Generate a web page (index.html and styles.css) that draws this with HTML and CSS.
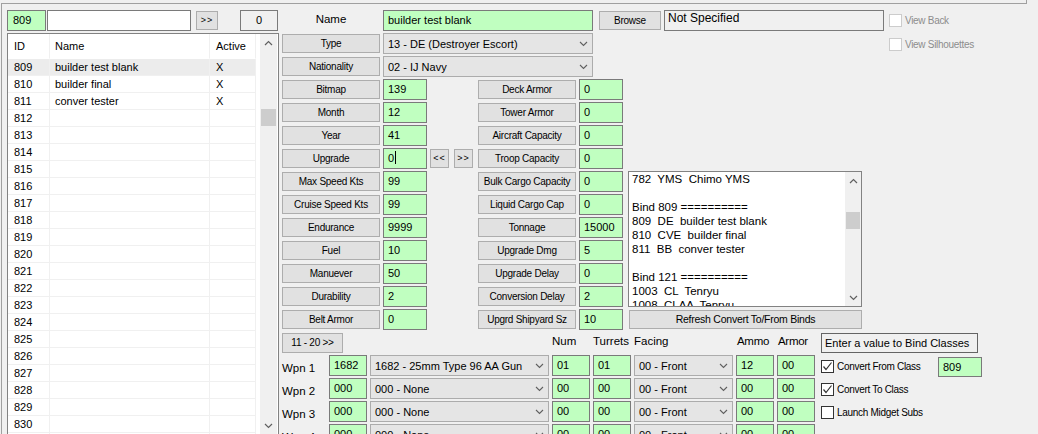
FILE: index.html
```html
<!DOCTYPE html>
<html>
<head>
<meta charset="utf-8">
<title>Ship Builder</title>
<link rel="stylesheet" href="styles.css">
</head>
<body>
<div class="frame">
  <div class="left">
    <div class="search">
      <div class="field green s-id">809</div>
      <div class="field white s-text"></div>
      <div class="btn s-go">&gt;&gt;</div>
      <div class="field plain s-zero">0</div>
    </div>
    <div class="list">
      <div class="tbl">
        <div class="tr th"><div class="c1">ID</div><div class="c2">Name</div><div class="c3">Active</div></div>
        <div class="tr sel"><div class="c1">809</div><div class="c2">builder test blank</div><div class="c3">X</div></div>
        <div class="tr"><div class="c1">810</div><div class="c2">builder final</div><div class="c3">X</div></div>
        <div class="tr"><div class="c1">811</div><div class="c2">conver tester</div><div class="c3">X</div></div>
        <div class="tr"><div class="c1">812</div><div class="c2"></div><div class="c3"></div></div>
        <div class="tr"><div class="c1">813</div><div class="c2"></div><div class="c3"></div></div>
        <div class="tr"><div class="c1">814</div><div class="c2"></div><div class="c3"></div></div>
        <div class="tr"><div class="c1">815</div><div class="c2"></div><div class="c3"></div></div>
        <div class="tr"><div class="c1">816</div><div class="c2"></div><div class="c3"></div></div>
        <div class="tr"><div class="c1">817</div><div class="c2"></div><div class="c3"></div></div>
        <div class="tr"><div class="c1">818</div><div class="c2"></div><div class="c3"></div></div>
        <div class="tr"><div class="c1">819</div><div class="c2"></div><div class="c3"></div></div>
        <div class="tr"><div class="c1">820</div><div class="c2"></div><div class="c3"></div></div>
        <div class="tr"><div class="c1">821</div><div class="c2"></div><div class="c3"></div></div>
        <div class="tr"><div class="c1">822</div><div class="c2"></div><div class="c3"></div></div>
        <div class="tr"><div class="c1">823</div><div class="c2"></div><div class="c3"></div></div>
        <div class="tr"><div class="c1">824</div><div class="c2"></div><div class="c3"></div></div>
        <div class="tr"><div class="c1">825</div><div class="c2"></div><div class="c3"></div></div>
        <div class="tr"><div class="c1">826</div><div class="c2"></div><div class="c3"></div></div>
        <div class="tr"><div class="c1">827</div><div class="c2"></div><div class="c3"></div></div>
        <div class="tr"><div class="c1">828</div><div class="c2"></div><div class="c3"></div></div>
        <div class="tr"><div class="c1">829</div><div class="c2"></div><div class="c3"></div></div>
        <div class="tr"><div class="c1">830</div><div class="c2"></div><div class="c3"></div></div>
        <div class="tr"><div class="c1">831</div><div class="c2"></div><div class="c3"></div></div>
      </div>
      <div class="vscroll">
        <div class="arr"><svg width="9" height="6" viewBox="0 0 9 6"><polyline points="1,5 4.5,1.5 8,5" fill="none" stroke="#606060" stroke-width="1.2"/></svg></div>
        <div class="track-gap list-gap"></div>
        <div class="thumb"></div>
        <div class="track-fill"></div>
        <div class="arr"><svg width="9" height="6" viewBox="0 0 9 6"><polyline points="1,1 4.5,4.5 8,1" fill="none" stroke="#606060" stroke-width="1.2"/></svg></div>
      </div>
    </div>
  </div>

  <div class="main">
    <div class="row">
      <div class="namelbl">Name</div>
      <div class="field green wide">builder test blank</div>
      <div class="btn browse">Browse</div>
      <div class="field plain notspec">Not Specified</div>
      <div class="chk dis vb"><span class="box"></span><span>View Back</span></div>
    </div>
    <div class="row">
      <div class="btn b98">Type</div>
      <div class="select wide"><span class="stxt">13 - DE (Destroyer Escort)</span><svg class="chev" width="9" height="6" viewBox="0 0 9 6"><polyline points="1,1 4.5,4.5 8,1" fill="none" stroke="#606060" stroke-width="1.1"/></svg></div>
      <div class="chk dis vs"><span class="box"></span><span>View Silhouettes</span></div>
    </div>
    <div class="row">
      <div class="btn b98">Nationality</div>
      <div class="select wide"><span class="stxt">02 - IJ Navy</span><svg class="chev" width="9" height="6" viewBox="0 0 9 6"><polyline points="1,1 4.5,4.5 8,1" fill="none" stroke="#606060" stroke-width="1.1"/></svg></div>
    </div>

    <div class="grid">
      <div class="memo">
        <div class="memotxt">782  YMS  Chimo YMS

Bind 809 ==========
809  DE  builder test blank
810  CVE  builder final
811  BB  conver tester

Bind 121 ==========
1003  CL  Tenryu
1008  CLAA  Tenryu</div>
        <div class="vscroll mscroll">
          <div class="arr"><svg width="9" height="6" viewBox="0 0 9 6"><polyline points="1,5 4.5,1.5 8,5" fill="none" stroke="#606060" stroke-width="1.2"/></svg></div>
          <div class="track-gap memo-gap"></div>
          <div class="thumb"></div>
          <div class="track-fill"></div>
          <div class="arr"><svg width="9" height="6" viewBox="0 0 9 6"><polyline points="1,1 4.5,4.5 8,1" fill="none" stroke="#606060" stroke-width="1.2"/></svg></div>
        </div>
      </div>

      <div class="btn gb">Bitmap</div><div class="field green">139</div><div></div><div class="btn gb">Deck Armor</div><div class="field green">0</div><div></div>
      <div class="btn gb">Month</div><div class="field green">12</div><div></div><div class="btn gb">Tower Armor</div><div class="field green">0</div><div></div>
      <div class="btn gb">Year</div><div class="field green">41</div><div></div><div class="btn gb">Aircraft Capacity</div><div class="field green">0</div><div></div>
      <div class="btn gb">Upgrade</div><div class="field green">0<span class="caret"></span></div><div class="arrows"><div class="btn ab">&lt;&lt;</div><div class="btn ab">&gt;&gt;</div></div><div class="btn gb">Troop Capacity</div><div class="field green">0</div><div></div>
      <div class="btn gb">Max Speed Kts</div><div class="field green">99</div><div></div><div class="btn gb">Bulk Cargo Capacity</div><div class="field green">0</div>
      <div class="btn gb">Cruise Speed Kts</div><div class="field green">99</div><div></div><div class="btn gb">Liquid Cargo Cap</div><div class="field green">0</div>
      <div class="btn gb">Endurance</div><div class="field green">9999</div><div></div><div class="btn gb">Tonnage</div><div class="field green">15000</div>
      <div class="btn gb">Fuel</div><div class="field green">10</div><div></div><div class="btn gb">Upgrade Dmg</div><div class="field green">5</div>
      <div class="btn gb">Manuever</div><div class="field green">50</div><div></div><div class="btn gb">Upgrade Delay</div><div class="field green">0</div>
      <div class="btn gb">Durability</div><div class="field green">2</div><div></div><div class="btn gb">Conversion Delay</div><div class="field green">2</div>
      <div class="btn gb">Belt Armor</div><div class="field green">0</div><div></div><div class="btn gb">Upgrd Shipyard Sz</div><div class="field green">10</div><div class="btn refresh">Refresh Convert To/From Binds</div>
    </div>

    <div class="wgrid">
      <div class="btn next">11 - 20 &gt;&gt;</div>
      <div></div>
      <div class="hd">Num</div>
      <div class="hd">Turrets</div>
      <div class="hd">Facing</div>
      <div class="hd alt">Ammo</div>
      <div class="hd alt">Armor</div>
      <div class="hint">Enter a value to Bind Classes</div>

      <div class="wl">Wpn 1</div>
      <div class="field green">1682</div>
      <div class="select"><span class="stxt">1682 - 25mm Type 96 AA Gun</span><svg class="chev" width="9" height="6" viewBox="0 0 9 6"><polyline points="1,1 4.5,4.5 8,1" fill="none" stroke="#606060" stroke-width="1.1"/></svg></div>
      <div class="field green">01</div>
      <div class="field green">01</div>
      <div class="select"><span class="stxt">00 - Front</span><svg class="chev" width="9" height="6" viewBox="0 0 9 6"><polyline points="1,1 4.5,4.5 8,1" fill="none" stroke="#606060" stroke-width="1.1"/></svg></div>
      <div class="field green">12</div>
      <div class="field green">00</div>
      <div class="opts"><div class="chk on"><span class="box"><svg width="11" height="11" viewBox="0 0 11 11"><polyline points="1.5,5.5 4,8.5 9.5,1.5" fill="none" stroke="#333" stroke-width="1.2"/></svg></span><span>Convert From Class</span></div><div class="field green cls">809</div></div>

      <div class="wl">Wpn 2</div>
      <div class="field green">000</div>
      <div class="select"><span class="stxt">000 - None</span><svg class="chev" width="9" height="6" viewBox="0 0 9 6"><polyline points="1,1 4.5,4.5 8,1" fill="none" stroke="#606060" stroke-width="1.1"/></svg></div>
      <div class="field green">00</div>
      <div class="field green">00</div>
      <div class="select"><span class="stxt">00 - Front</span><svg class="chev" width="9" height="6" viewBox="0 0 9 6"><polyline points="1,1 4.5,4.5 8,1" fill="none" stroke="#606060" stroke-width="1.1"/></svg></div>
      <div class="field green">00</div>
      <div class="field green">00</div>
      <div class="opts"><div class="chk on"><span class="box"><svg width="11" height="11" viewBox="0 0 11 11"><polyline points="1.5,5.5 4,8.5 9.5,1.5" fill="none" stroke="#333" stroke-width="1.2"/></svg></span><span>Convert To Class</span></div></div>

      <div class="wl">Wpn 3</div>
      <div class="field green">000</div>
      <div class="select"><span class="stxt">000 - None</span><svg class="chev" width="9" height="6" viewBox="0 0 9 6"><polyline points="1,1 4.5,4.5 8,1" fill="none" stroke="#606060" stroke-width="1.1"/></svg></div>
      <div class="field green">00</div>
      <div class="field green">00</div>
      <div class="select"><span class="stxt">00 - Front</span><svg class="chev" width="9" height="6" viewBox="0 0 9 6"><polyline points="1,1 4.5,4.5 8,1" fill="none" stroke="#606060" stroke-width="1.1"/></svg></div>
      <div class="field green">00</div>
      <div class="field green">00</div>
      <div class="opts"><div class="chk"><span class="box"></span><span>Launch Midget Subs</span></div></div>

      <div class="wl">Wpn 4</div>
      <div class="field green">000</div>
      <div class="select"><span class="stxt">000 - None</span><svg class="chev" width="9" height="6" viewBox="0 0 9 6"><polyline points="1,1 4.5,4.5 8,1" fill="none" stroke="#606060" stroke-width="1.1"/></svg></div>
      <div class="field green">00</div>
      <div class="field green">00</div>
      <div class="select"><span class="stxt">00 - Front</span><svg class="chev" width="9" height="6" viewBox="0 0 9 6"><polyline points="1,1 4.5,4.5 8,1" fill="none" stroke="#606060" stroke-width="1.1"/></svg></div>
      <div class="field green">00</div>
      <div class="field green">00</div>
      <div></div>
    </div>
  </div>
</div>
</body>
</html>
```

FILE: styles.css
```css
* { box-sizing: border-box; }

html, body {
  margin: 0;
  padding: 0;
}

body {
  width: 1038px;
  height: 434px;
  overflow: hidden;
  background: #f0f0f0;
  font-family: "Liberation Sans", Arial, sans-serif;
  font-size: 11px;
  color: #000;
}

.frame {
  position: relative;
  display: flex;
  align-items: flex-start;
  margin: 3px 0 0 1px;
  width: 1026px;
  height: 431px;
  border-top: 1px solid #a0a0a0;
  border-left: 1px solid #a0a0a0;
  padding: 6px 0 0 5px;
}

.frame::after {
  content: "";
  position: absolute;
  left: 1024px;
  top: -4px;
  width: 1px;
  height: 4px;
  background: #a0a0a0;
}

/* generic controls */
.field {
  height: 21px;
  border: 1px solid #7a7a7a;
  padding: 0 4px;
  line-height: 18px;
  white-space: nowrap;
  overflow: hidden;
}
.green { background: #c0ffc0; }
.white { background: #ffffff; }
.plain { background: #f0f0f0; }

.btn {
  height: 19px;
  margin-top: 1px;
  background: #e1e1e1;
  border: 1px solid #adadad;
  font-size: 10px;
  letter-spacing: -0.25px;
  line-height: 17px;
  text-align: center;
  white-space: nowrap;
}

.select {
  height: 21px;
  display: flex;
  align-items: center;
  background: #e5e5e5;
  border: 1px solid #acacac;
  padding-left: 4px;
  white-space: nowrap;
  overflow: hidden;
}
.select .stxt { flex: 1; }
.select .chev { flex: none; margin-right: 4px; }

/* left panel */
.left {
  width: 272px;
  flex: none;
}

.search {
  display: flex;
  height: 21px;
}
.s-id { width: 39px; padding-left: 5px; }
.s-text { width: 144px; margin-left: 1px; }
.s-go { width: 22px; margin-left: 5px; font-size: 9px; letter-spacing: 1px; }
.s-zero { width: 38px; margin-left: 22px; text-align: center; font-size: 11px; }

.list {
  display: flex;
  margin-top: 2px;
  height: 402px;
  border: 1px solid #828282;
  background: #fff;
}

.tbl {
  width: 252px;
  flex: none;
}

.tr {
  display: flex;
  height: 17px;
}
.tr > div {
  height: 17px;
  border-right: 1px solid #f0f0f0;
  border-bottom: 1px solid #f0f0f0;
  padding-left: 6px;
  line-height: 16px;
  white-space: nowrap;
  overflow: hidden;
}
.c1 { width: 42px; }
.c2 { width: 160px; padding-left: 5px !important; }
.c3 { width: 46px; }

.th { height: 25px; }
.th > div {
  height: 25px;
  line-height: 25px;
  border-bottom-color: #fff;
}

.sel > div { background: #ececec; }

.vscroll {
  width: 17px;
  flex: none;
  display: flex;
  flex-direction: column;
  background: #f0f0f0;
}
.vscroll .arr {
  height: 17px;
  flex: none;
  display: flex;
  align-items: center;
  justify-content: center;
}
.track-gap { flex: none; }
.list-gap { height: 58px; }
.thumb {
  flex: none;
  height: 17px;
  margin: 0 1px;
  background: #cdcdcd;
}
.track-fill { flex: 1; }

/* main panel */
.main {
  margin-left: 3px;
  width: 748px;
  flex: none;
}

.row {
  display: flex;
  align-items: flex-start;
  height: 21px;
  margin-bottom: 2px;
}

.namelbl {
  width: 98px;
  text-align: center;
  line-height: 19px;
  font-size: 11.5px;
}
.wide { width: 210px; margin-left: 3px; }
.b98 { width: 98px; }
.browse { width: 62px; margin-left: 6px; }
.notspec {
  width: 220px;
  margin-left: 3px;
  font-size: 12px;
  line-height: 15px;
  padding-left: 3px;
}

.chk {
  display: flex;
  align-items: center;
  font-size: 10px;
  letter-spacing: -0.3px;
  white-space: nowrap;
}
.chk .box {
  width: 13px;
  height: 13px;
  flex: none;
  background: #fff;
  border: 1px solid #333;
  margin-right: 3px;
  display: flex;
  align-items: center;
  justify-content: center;
}
.chk.dis { color: #8d8d8d; }
.chk.dis .box { border-color: #cccccc; }
.vb { margin-left: 5px; margin-top: 4px; }
.vs { margin-left: 296px; margin-top: 5px; }

.grid {
  display: grid;
  grid-template-columns: 98px 44px 45px 98px 44px 237px;
  grid-template-rows: repeat(11, 21px);
  column-gap: 3px;
  row-gap: 2px;
}

.gb { width: 98px; }

.caret {
  display: inline-block;
  width: 1px;
  height: 13px;
  background: #000;
  vertical-align: -2px;
  margin-left: 1px;
}

.arrows {
  display: flex;
  gap: 5px;
}
.ab {
  width: 19px;
  font-size: 9px;
  letter-spacing: 1px;
}

.memo {
  grid-column: 6;
  grid-row: 5 / 11;
  margin-left: 2px;
  width: 234px;
  display: flex;
  background: #fff;
  border: 1px solid #828282;
  overflow: hidden;
}
.memotxt {
  flex: 1;
  padding: 0 0 0 3px;
  white-space: pre;
  line-height: 14px;
  font-size: 11.5px;
  overflow: hidden;
}
.mscroll { width: 16px; }
.memo-gap { height: 23px; }

.refresh {
  grid-column: 6;
  margin-left: 3px;
  width: 233px;
  font-size: 10.5px;
}

/* weapons */
.wgrid {
  display: grid;
  margin-top: 3px;
  grid-template-columns: 44px 38px 179px 38px 38px 99px 38px 38px 220px;
  grid-template-rows: 20px repeat(4, 21px);
  column-gap: 3px;
  row-gap: 2px;
}

.next {
  grid-column: 1 / 3;
  width: 61px;
  margin-top: 0;
  height: 20px;
  line-height: 18px;
  font-size: 10px;
}

.hd {
  font-size: 11.5px;
  line-height: 16px;
  white-space: nowrap;
}
.hd.alt { letter-spacing: -0.3px; padding-left: 1px; }

.hint {
  margin-left: 3px;
  width: 157px;
  height: 20px;
  border: 1px solid #646464;
  padding-left: 3px;
  line-height: 18px;
  font-size: 11px;
  white-space: nowrap;
}

.wl {
  font-size: 11.5px;
  line-height: 26px;
  white-space: nowrap;
}

.opts {
  display: flex;
  align-items: flex-start;
  padding-left: 3px;
}
.opts .chk {
  width: 117px;
  margin-top: 5px;
  color: #000;
}
.cls {
  width: 44px;
  height: 20px;
  margin-top: 2px;
}
```
